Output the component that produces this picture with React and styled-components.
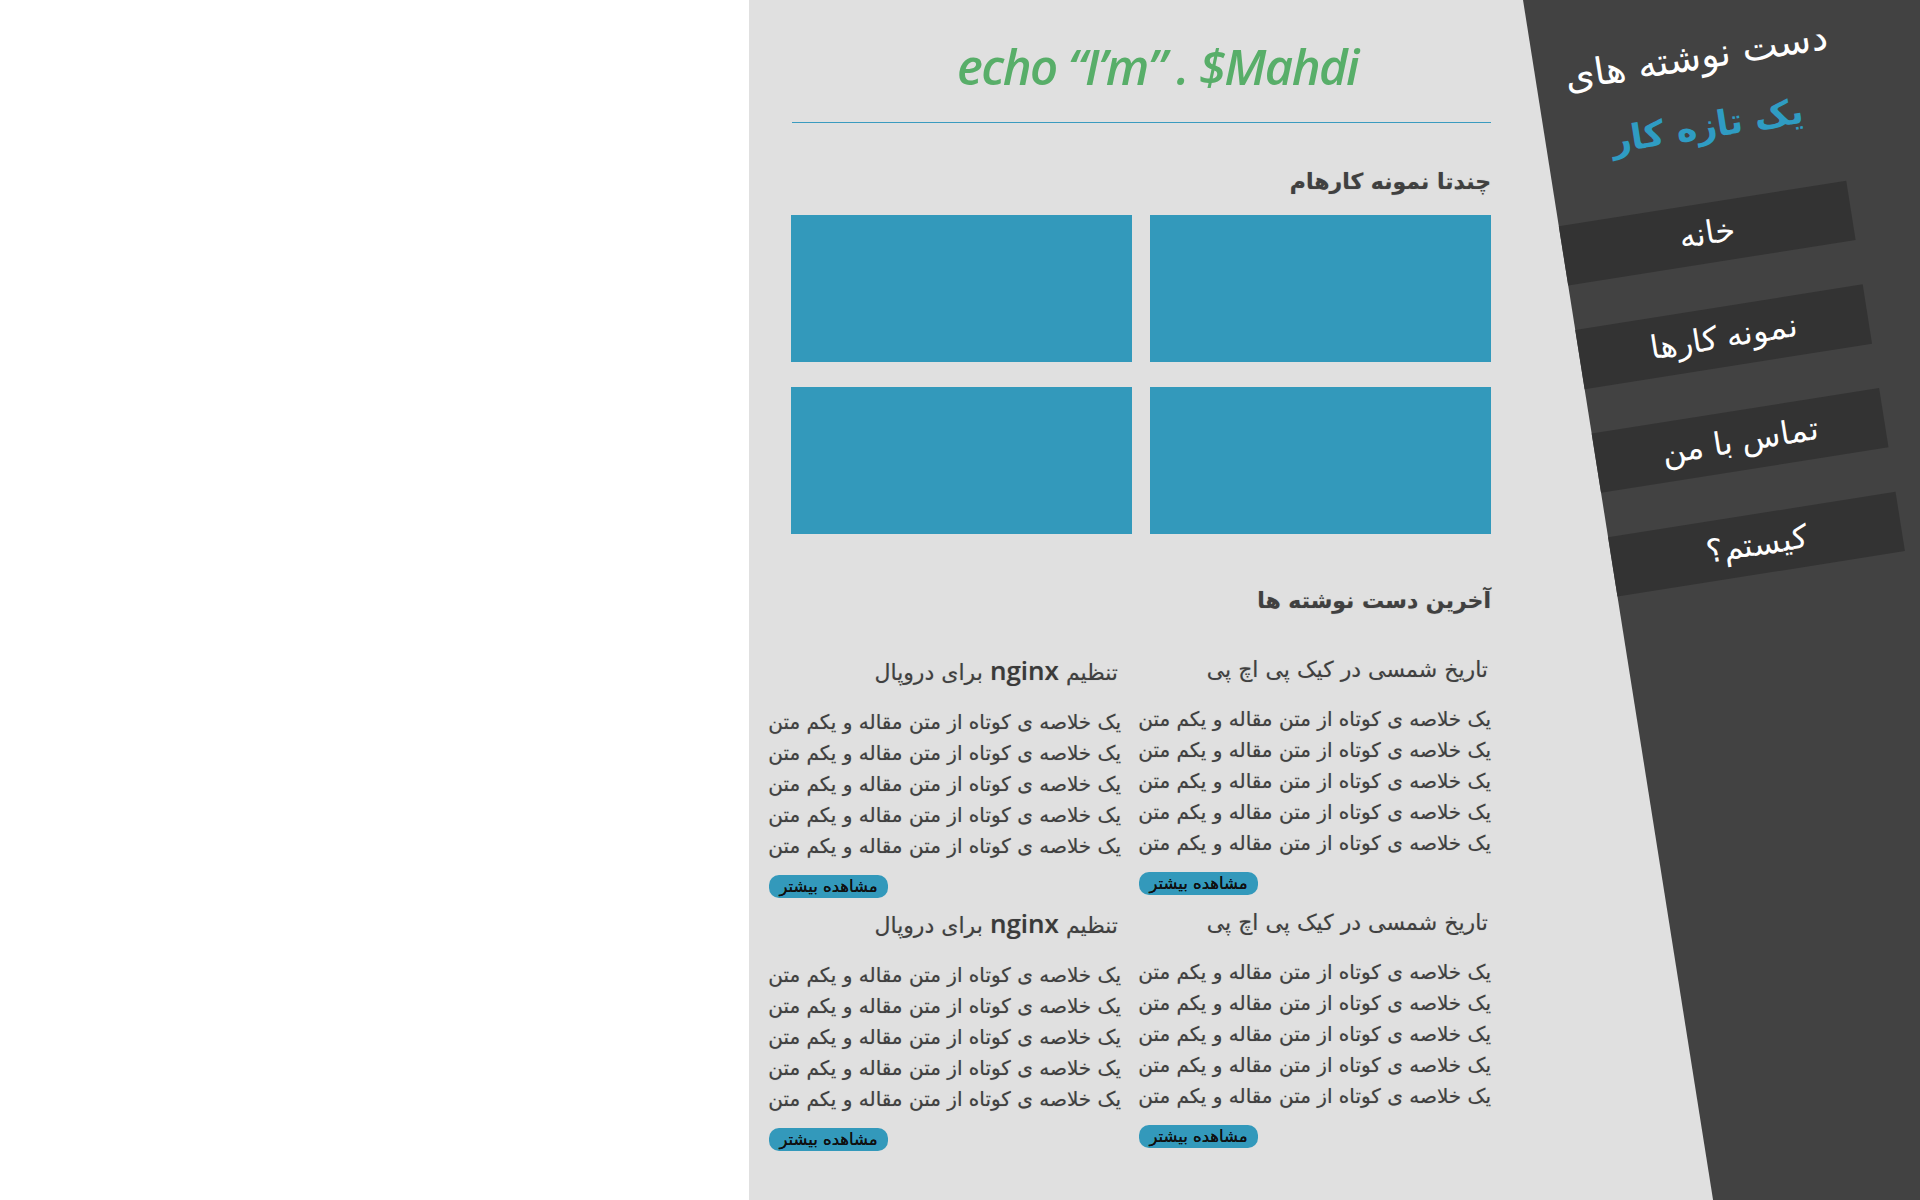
import React from 'react';
import styled, { createGlobalStyle } from 'styled-components';

const GlobalStyle = createGlobalStyle`
  html, body {
    margin: 0;
    padding: 0;
    background: #fff;
  }
  body {
    font-family: "DejaVu Sans", "Noto Sans", sans-serif;
    overflow: hidden;
  }
`;

const works = [1, 2, 3, 4];

const posts = [
  { title: 'تاریخ شمسی در کیک پی اچ پی' },
  { title: 'تنظیم', latin: 'nginx', rest: 'برای دروپال' },
  { title: 'تاریخ شمسی در کیک پی اچ پی' },
  { title: 'تنظیم', latin: 'nginx', rest: 'برای دروپال' }
];

const menu = ['خانه', 'نمونه کارها', 'تماس با من', 'کیستم؟'];

const summary = 'یک خلاصه ی کوتاه از متن مقاله و یکم متن';

const App = () => {
  return (
    <>
      <GlobalStyle />
      <Page>
        <Blank />
        <Main>
          <Content dir="rtl">
            <Title dir="ltr">echo “I’m” . $Mahdi</Title>
            <Rule />

            <SectionTitle>چندتا نمونه کارهام</SectionTitle>
            <WorkGrid>
              {works.map((w) => (
                <WorkBox key={w} />
              ))}
            </WorkGrid>

            <SectionTitle $gap={47}>آخرین دست نوشته ها</SectionTitle>
            <PostGrid>
              {posts.map((post, index) => (
                <Post key={index}>
                  <PostTitle>
                    {post.title}
                    {post.latin && (
                      <>
                        {' '}
                        <Latin>{post.latin}</Latin> {post.rest}
                      </>
                    )}
                  </PostTitle>
                  <Summary>
                    {[...Array(5)].map((_, i) => (
                      <div key={i}>{summary}</div>
                    ))}
                  </Summary>
                  <MoreButton>مشاهده بیشتر</MoreButton>
                </Post>
              ))}
            </PostGrid>
          </Content>

          <Sidebar>
            <Brand dir="rtl">
              <BrandTop>دست نوشته های</BrandTop>
              <BrandName>یک تازه کار</BrandName>
            </Brand>
            <Nav>
              {menu.map((item) => (
                <NavItem key={item} dir="rtl">{item}</NavItem>
              ))}
            </Nav>
          </Sidebar>
        </Main>
      </Page>
    </>
  );
};

const Page = styled.div`
  display: flex;
  height: 1200px;
  overflow: hidden;
`;

const Blank = styled.div`
  width: 749px;
  flex-shrink: 0;
  background: #fff;
`;

const Main = styled.div`
  flex: 1;
  display: flex;
  align-items: flex-start;
  background: #e0e0e0;
  overflow: hidden;
`;

const Content = styled.main`
  width: 774px;
  flex-shrink: 0;
  box-sizing: border-box;
  padding: 0 32px 0 43px;
`;

const Title = styled.h1`
  margin: 0;
  padding: 36px 0 0 32px;
  font-family: "Open Sans", sans-serif;
  font-style: italic;
  font-weight: 600;
  font-size: 49px;
  line-height: 61px;
  letter-spacing: -1.6px;
  color: #58ae69;
  text-align: center;
`;

const Rule = styled.div`
  height: 1px;
  margin-top: 25px;
  background: #3a9bbf;
`;

const SectionTitle = styled.h2`
  margin: ${(p) => p.$gap || 39}px 0 0;
  font-size: 22px;
  line-height: 40px;
  font-weight: bold;
  color: #404040;
  text-align: right;
  text-shadow: 0 0 1px rgba(0, 0, 0, 0.3);
`;

const WorkGrid = styled.div`
  display: grid;
  grid-template-columns: 341px 341px;
  grid-auto-rows: 147px;
  column-gap: 18px;
  row-gap: 25px;
  margin-top: 13px;
`;

const WorkBox = styled.div`
  background: #3399bb;
`;

const PostGrid = styled.div`
  display: grid;
  grid-template-columns: 349px 349px;
  column-gap: 21px;
  row-gap: 5px;
  margin-top: 29px;
`;

const Post = styled.article`
  display: flex;
  flex-direction: column;
`;

const PostTitle = styled.h3`
  margin: 0 3px 0 0;
  font-size: 22px;
  line-height: 40px;
  font-weight: normal;
  color: #404040;
  white-space: nowrap;
  text-shadow: 0 0 1px rgba(0, 0, 0, 0.25);
`;

const Latin = styled.span`
  font-family: "Open Sans", sans-serif;
  font-weight: 600;
  font-size: 26px;
  color: #3a3a3a;
`;

const Summary = styled.div`
  margin-top: 14px;
  font-size: 20px;
  line-height: 31px;
  color: #404040;
  white-space: nowrap;
  text-shadow: 0 0 1px rgba(0, 0, 0, 0.3);
`;

const MoreButton = styled.button`
  align-self: flex-end;
  width: 119px;
  height: 23px;
  margin: 13px 0 0 -3px;
  padding: 0;
  border: none;
  border-radius: 10px;
  background: #3399bb;
  color: #111;
  font-family: "DejaVu Sans", sans-serif;
  font-size: 16.5px;
  line-height: 23px;
  text-shadow: 0 0 0.6px #000;
  cursor: pointer;
`;

const Sidebar = styled.aside`
  flex-shrink: 0;
  width: 440px;
  height: 1420px;
  background: #424242;
  transform: rotate(-9deg);
  transform-origin: 0 0;
  color: #fff;
`;

const Brand = styled.div`
  width: 324px;
  padding-top: 55px;
  text-align: center;
`;

const BrandTop = styled.div`
  font-size: 38px;
  line-height: 56px;
  color: #fff;
`;

const BrandName = styled.div`
  margin-top: 12px;
  font-size: 35px;
  line-height: 60px;
  font-weight: bold;
  color: #2f9cc3;
`;

const Nav = styled.nav`
  display: flex;
  flex-direction: column;
  gap: 45px;
  margin-top: 46px;
`;

const NavItem = styled.a`
  display: block;
  width: 291px;
  height: 60px;
  background: #333;
  color: #fff;
  font-size: 32px;
  font-weight: 300;
  line-height: 60px;
  text-align: center;
  text-decoration: none;
  cursor: pointer;
`;

export default App;
